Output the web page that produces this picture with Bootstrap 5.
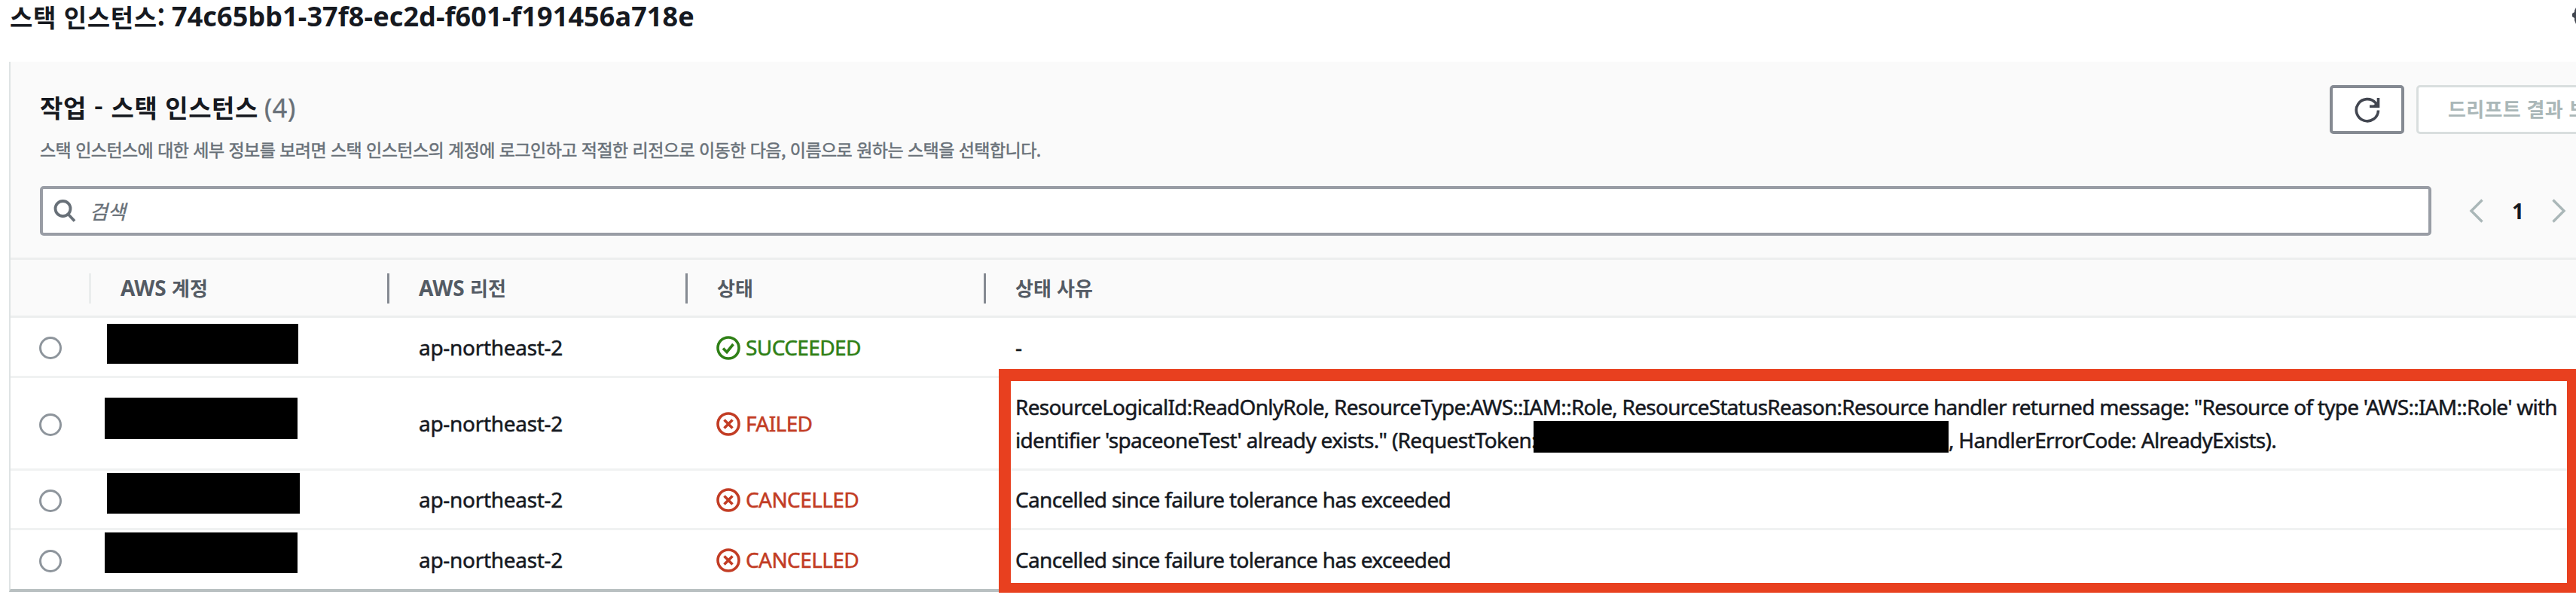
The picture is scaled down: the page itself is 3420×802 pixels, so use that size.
<!DOCTYPE html>
<html lang="ko">
<head>
<meta charset="utf-8">
<title>스택 인스턴스</title>
<link href="https://cdn.jsdelivr.net/npm/bootstrap@5.3.0/dist/css/bootstrap.min.css" rel="stylesheet">
<style>
body{font-family:"Noto Sans","Noto Sans CJK KR",sans-serif;font-size:28px;line-height:44px;color:#16191f;width:3420px;height:802px;overflow:hidden;background:#fff}
.ko{font-family:"Noto Sans CJK KR",sans-serif}
.page-title{height:82px;padding-left:13px;font-size:36px;line-height:44px;font-weight:700;white-space:pre}
.page-title .ko,.panel-title .ko{font-size:33px;letter-spacing:.6px}
.page-title .uid{letter-spacing:.1px;margin-left:8px}
.gear{width:5px;height:22px;margin-top:10px}
.panel{margin-left:12px;border-left:2px solid #dfe3e4;border-bottom:4px solid #b9c0c1;width:3408px;overflow:hidden}
.panel-head{height:263px;background:#fafafa;border-bottom:3px solid #eceeee;padding-left:39px}
.title-block{width:3040px;height:144px;padding-top:38px}
.panel-title{font-size:36px;font-weight:700;line-height:44px}
.panel-title .count{font-weight:400;font-size:34px;color:#687078;margin-left:8px;letter-spacing:.6px;-webkit-text-stroke:.4px}
.desc{font-size:23px;line-height:32px;color:#687078;letter-spacing:-.54px;margin-top:17px;-webkit-text-stroke:.5px}
.tools{padding-top:31px;gap:16px}
.btn-refresh{width:99px;height:65px;border:4px solid #858a92;border-radius:5px;background:#fff}
.btn-drift{width:330px;height:65px;border:3px solid #d9dede;border-radius:5px;background:#fff;color:#aab7b8;font-size:26px;letter-spacing:.3px;font-weight:700;padding-left:39px;line-height:56px;white-space:nowrap}
.search-box{width:3175px;height:66px;border:4px solid #999da5;border-radius:5px;background:#fff;padding-left:14px}
.search-row{margin-top:21px}
.search-box i{color:#687078;font-size:26px;margin-left:18px;-webkit-text-stroke:.4px}
.pager{color:#16191f;font-weight:700}
.inst{border-collapse:separate;border-spacing:0;table-layout:fixed;margin:0;color:#16191f}
.inst>:not(caption)>*>*{padding:0 0 0 38px;border-bottom:3px solid #f0f2f2;vertical-align:middle;position:relative;box-shadow:none}
.inst>thead>tr>th{height:77px;background:#fafafa;border-color:#eceeee;color:#545b64;font-weight:700;padding-bottom:1px}
.inst th::after{content:"";position:absolute;right:1px;top:18px;width:3px;height:40px;background:#858a92}
.inst th:first-child::after{background:#eaeded}
.inst th:last-child::after{display:none}
.inst th .ko{font-size:26px}
.inst tbody tr:last-child td{border-bottom:0}
.inst tbody td{-webkit-text-stroke:.5px}
.inst tbody td:first-child{padding-top:3px}
.inst .region{letter-spacing:-.3px}
.h1r{height:80px}.h2r{height:123px}.h3r{height:79px}.h4r{height:78px}
.radio{display:block;width:30px;height:30px;border:3px solid #8e959c;border-radius:50%}
.redact{position:absolute;background:#000}
.state{letter-spacing:-.6px;gap:7px;margin-left:-1px}
.state svg{width:32px;height:32px;margin-top:2px}
.ok{color:#2f8016}.bad{color:#c23c24}
.reason{letter-spacing:-.68px;white-space:nowrap}
.reason .first{letter-spacing:-.74px}
.token{display:inline-block;width:551px;height:42px;background:#000;vertical-align:top;margin:-3px 0 0 -4px}
.callout{position:absolute;left:1326px;top:490px;width:2100px;height:297px;border:solid #e8401f;border-width:16px 18px 13px 16px}
</style>
</head>
<body class="position-relative">
<header class="page-title d-flex">
<span class="ko">스택 인스턴스:</span><span class="uid">74c65bb1-37f8-ec2d-f601-f191456a718e</span>
<svg class="gear ms-auto" viewBox="0 0 5 22"><path d="M5 0V22L3 17V14L0 12V8L3 6V4Z" fill="#424650"/></svg>
</header>
<section class="panel">
<div class="panel-head">
<div class="d-flex">
<div class="title-block flex-shrink-0">
<div class="panel-title"><span class="ko">작업 - 스택 인스턴스</span><span class="count">(4)</span></div>
<div class="desc ko">스택 인스턴스에 대한 세부 정보를 보려면 스택 인스턴스의 계정에 로그인하고 적절한 리전으로 이동한 다음, 이름으로 원하는 스택을 선택합니다.</div>
</div>
<div class="tools d-flex flex-shrink-0">
<div class="btn-refresh d-flex align-items-center justify-content-center"><svg width="36" height="36" viewBox="0 0 36 36" fill="none" stroke="#424650" stroke-width="3.6"><path d="M32.5 18.5A14.6 14.6 0 1 1 29 8.7L32.5 13"/><path d="M32.5 2V13.2H21" /><path d="M32 6V13H25Z" fill="#424650" stroke="none"/></svg></div>
<div class="btn-drift ko">드리프트 결과 보기</div>
</div>
</div>
<div class="search-row d-flex">
<div class="search-box d-flex align-items-center flex-shrink-0">
<svg width="30" height="30" viewBox="0 0 30 30" fill="none" stroke="#687078" stroke-width="3.8"><circle cx="12.5" cy="12" r="10"/><path d="M19.5 19.5L28 28.5"/></svg><i class="ko">검색</i></div>
<div class="pager d-flex align-items-center flex-shrink-0">
<svg width="20" height="32" viewBox="0 0 20 32" fill="none" stroke="#aab7b8" stroke-width="3.4" style="margin-left:50px"><path d="M17.500 1.500L3 16L17.500 30.500"/></svg>
<span style="margin:0 0 0 37px">1</span>
<svg width="20" height="32" viewBox="0 0 20 32" fill="none" stroke="#aab7b8" stroke-width="3.4" style="margin-left:36px"><path d="M2.500 1.500L17 16L2.500 30.500"/></svg>
</div>
</div>
</div>
<table class="table inst">
<colgroup><col style="width:108px"><col style="width:396px"><col style="width:396px"><col style="width:396px"><col></colgroup>
<thead><tr><th></th><th>AWS <span class="ko">계정</span></th><th>AWS <span class="ko">리전</span></th><th><span class="ko">상태</span></th><th><span class="ko">상태 사유</span></th></tr></thead>
<tbody>
<tr class="h1r"><td><span class="radio"></span></td><td><span class="redact" style="left:20px;top:8px;width:254px;height:53px"></span></td><td class="region">ap-northeast-2</td>
<td><div class="state ok d-flex align-items-center"><svg viewBox="0 0 32 32" fill="none" stroke="currentColor" stroke-width="3.6"><circle cx="16" cy="16" r="14"/><path d="M9 16.500L14 21.500L22.500 11"/></svg>SUCCEEDED</div></td><td class="reason">-</td></tr>
<tr class="h2r"><td><span class="radio"></span></td><td><span class="redact" style="left:17px;top:26px;width:256px;height:55px"></span></td><td class="region">ap-northeast-2</td>
<td><div class="state bad d-flex align-items-center"><svg viewBox="0 0 32 32" fill="none" stroke="currentColor" stroke-width="3.6"><circle cx="16" cy="16" r="14"/><path d="M10.500 10.500L21.500 21.500M21.500 10.500L10.500 21.500"/></svg>FAILED</div></td>
<td class="reason"><div class="first">ResourceLogicalId:ReadOnlyRole, ResourceType:AWS::IAM::Role, ResourceStatusReason:Resource handler returned message: "Resource of type 'AWS::IAM::Role' with</div><div style="height:44px">identifier 'spaceoneTest' already exists." (RequestToken:<span class="token"></span>, HandlerErrorCode: AlreadyExists).</div></td></tr>
<tr class="h3r"><td><span class="radio"></span></td><td><span class="redact" style="left:20px;top:3px;width:256px;height:54px"></span></td><td class="region">ap-northeast-2</td>
<td><div class="state bad d-flex align-items-center"><svg viewBox="0 0 32 32" fill="none" stroke="currentColor" stroke-width="3.6"><circle cx="16" cy="16" r="14"/><path d="M10.500 10.500L21.500 21.500M21.500 10.500L10.500 21.500"/></svg>CANCELLED</div></td><td class="reason">Cancelled since failure tolerance has exceeded</td></tr>
<tr class="h4r"><td><span class="radio"></span></td><td><span class="redact" style="left:17px;top:3px;width:256px;height:54px"></span></td><td class="region">ap-northeast-2</td>
<td><div class="state bad d-flex align-items-center"><svg viewBox="0 0 32 32" fill="none" stroke="currentColor" stroke-width="3.6"><circle cx="16" cy="16" r="14"/><path d="M10.500 10.500L21.500 21.500M21.500 10.500L10.500 21.500"/></svg>CANCELLED</div></td><td class="reason">Cancelled since failure tolerance has exceeded</td></tr>
</tbody>
</table>
</section>
<div class="callout"></div>
<script src="https://cdn.jsdelivr.net/npm/bootstrap@5.3.0/dist/js/bootstrap.bundle.min.js"></script>
</body>
</html>
